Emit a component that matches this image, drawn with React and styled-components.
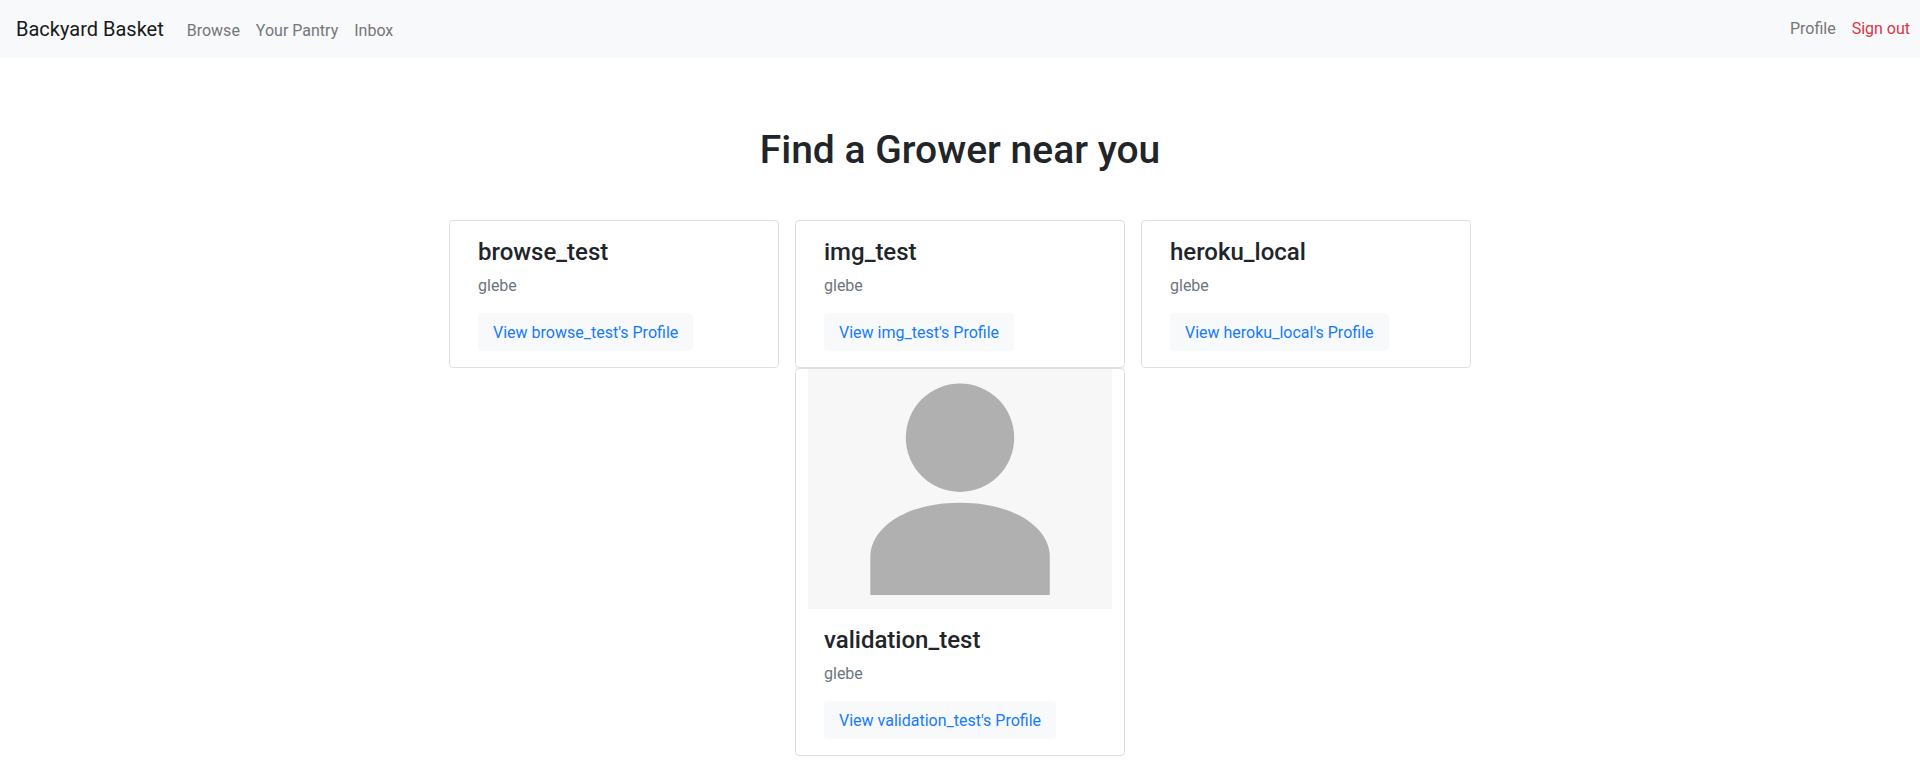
import React from "react";
import styled, { createGlobalStyle } from "styled-components";

const GlobalStyle = createGlobalStyle`
  *, *::before, *::after { box-sizing: border-box; }
  body {
    margin: 0;
    background: #fff;
    color: #212529;
    font-family: Roboto, "Liberation Sans", sans-serif;
    font-size: 16px;
    line-height: 24px;
  }
`;

const Navbar = styled.nav`
  display: flex;
  align-items: center;
  justify-content: space-between;
  min-height: 58px;
  padding: 8px 10px 8px 16px;
  background: #f8f9fb;
`;

const NavGroup = styled.div`
  display: flex;
  align-items: baseline;
  gap: 16px;
`;

const Brand = styled.a`
  margin-right: 7px;
  color: #17191b;
  font-size: 20px;
  line-height: 30px;
  text-decoration: none;
`;

const NavLink = styled.a`
  color: #757678;
  text-decoration: none;
`;

const SignOut = styled.button`
  padding: 0;
  border: 0;
  background: none;
  color: #dc3545;
  font: inherit;
  cursor: pointer;
`;

const Main = styled.main`
  display: flex;
  flex-direction: column;
  align-items: center;
  padding: 68px 16px 24px;
`;

const Heading = styled.h1`
  margin: 0 0 46px;
  font-size: 39px;
  font-weight: 500;
  line-height: 48px;
  text-align: center;
`;

const Growers = styled.section`
  display: flex;
  flex-wrap: wrap;
  justify-content: center;
  column-gap: 16px;
  width: 100%;
  max-width: 1110px;
`;

const Card = styled.article`
  width: 330px;
  padding: 0 12px;
  border: 1px solid #dfdfdf;
  border-radius: 4px;
  background: #fff;
`;

const Portrait = styled.svg`
  display: block;
  width: 100%;
  height: auto;
  background: #f7f7f7;
`;

const CardBody = styled.div`
  padding: 16px;
`;

const Name = styled.h2`
  margin: 0 0 7px;
  font-size: 24px;
  font-weight: 500;
  line-height: 30px;
`;

const Area = styled.p`
  margin: 0 0 15px;
  color: #6c757d;
`;

const ProfileLink = styled.a`
  display: inline-block;
  padding: 8px 15px 6px;
  border-radius: 4px;
  background: #f8f9fb;
  color: #147bff;
  text-decoration: none;
  vertical-align: top;
`;

const growers = [
  { name: "browse_test", area: "glebe" },
  { name: "img_test", area: "glebe" },
  { name: "heroku_local", area: "glebe" },
  { name: "validation_test", area: "glebe", portrait: true },
];

function DefaultPortrait({ name }) {
  return (
    <Portrait viewBox="0 0 304 240" role="img" aria-label={name}>
      <circle cx="152" cy="68.7" r="54.2" fill="#b0b0b0" />
      <path
        d="M62.3 226V187.7C62.3 160 96 133.7 152 133.7C208 133.7 241.8 160 241.8 187.7V226Z"
        fill="#b0b0b0"
      />
    </Portrait>
  );
}

function GrowerCard({ name, area, portrait }) {
  return (
    <Card>
      {portrait && <DefaultPortrait name={name} />}
      <CardBody>
        <Name>{name}</Name>
        <Area>{area}</Area>
        <ProfileLink href="#">{`View ${name}'s Profile`}</ProfileLink>
      </CardBody>
    </Card>
  );
}

export default function App() {
  return (
    <>
      <GlobalStyle />
      <Navbar>
        <NavGroup>
          <Brand href="#">Backyard Basket</Brand>
          <NavLink href="#">Browse</NavLink>
          <NavLink href="#">Your Pantry</NavLink>
          <NavLink href="#">Inbox</NavLink>
        </NavGroup>
        <NavGroup>
          <NavLink href="#">Profile</NavLink>
          <SignOut type="button">Sign out</SignOut>
        </NavGroup>
      </Navbar>
      <Main>
        <Heading>Find a Grower near you</Heading>
        <Growers>
          {growers.map((grower) => (
            <GrowerCard key={grower.name} {...grower} />
          ))}
        </Growers>
      </Main>
    </>
  );
}
